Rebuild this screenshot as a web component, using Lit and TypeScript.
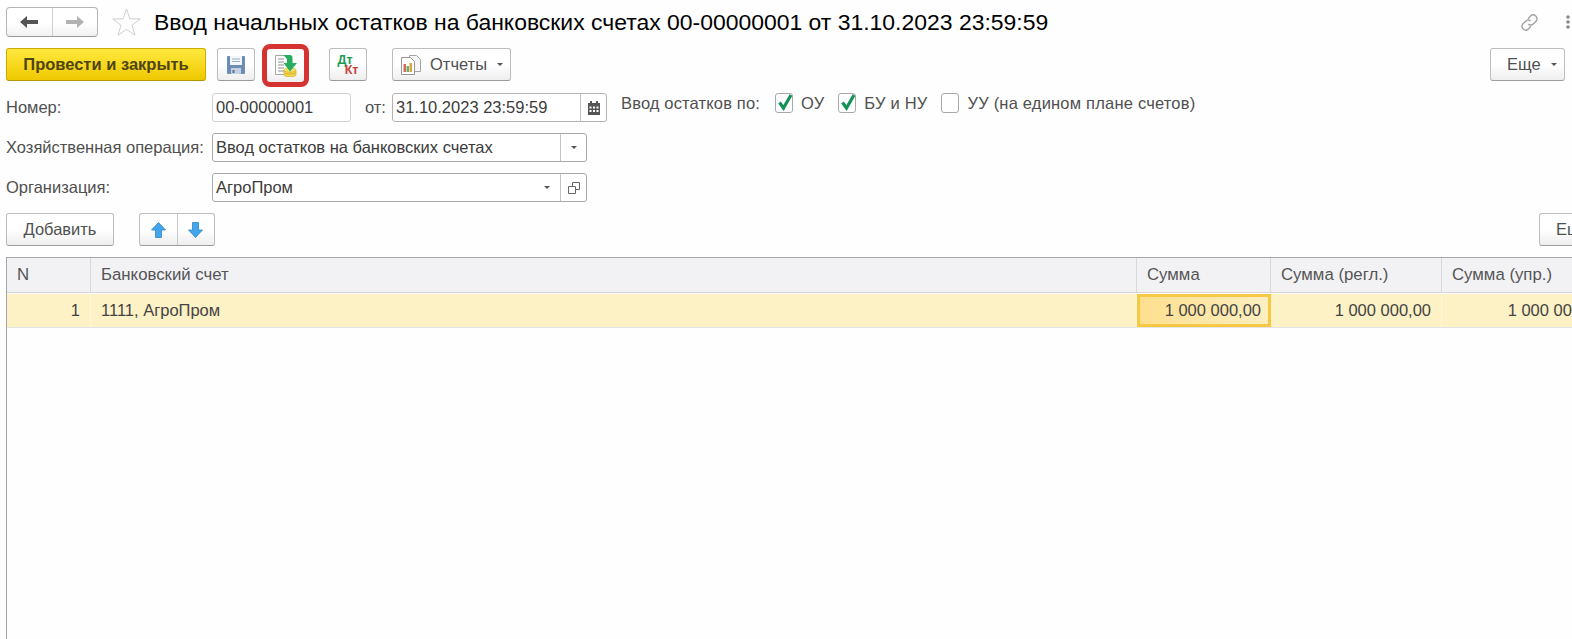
import { LitElement, html, css, svg } from "lit";
import { customElement } from "lit/decorators.js";

const caret = svg`<path d="M0 0h6L3 3z" fill="#555"/>`;
const check = html`<svg class="tick" width="20" height="20" viewBox="0 0 20 20"><path d="M4.500 9.500L8.500 15 16 2" fill="none" stroke="#14925a" stroke-width="3.200"/></svg>`;
const caretIcon = html`<svg class="caret" width="6" height="3" viewBox="0 0 6 3">${caret}</svg>`;
const segCaret = html`<svg width="6" height="3" viewBox="0 0 6 3">${caret}</svg>`;

@customElement("app-root")
export class AppRoot extends LitElement {
  static styles = css`
    :host {
      display: block;
      width: 1572px;
      height: 639px;
      overflow: hidden;
      background: #fefefe;
      font-family: "Liberation Sans", Arial, sans-serif;
      font-size: 16.500px;
      color: #505050;
    }
    * { box-sizing: border-box; }
    svg { display: block; flex: none; }
    .titlebar { display: flex; align-items: center; height: 30px; margin-top: 7px; padding-left: 6px; }
    .nav { display: flex; width: 92px; height: 30px; border: 1px solid #b5b5b5; border-bottom-color: #9a9a9a; border-radius: 4px; background: linear-gradient(#fff 55%, #f0f0f0); }
    .nav span { display: flex; align-items: center; justify-content: center; flex: 1; }
    .nav span + span { border-left: 1px solid #cfcfcf; }
    .star { margin-left: 14px; }
    h1 { margin: 0 0 0 13px; font-weight: 400; font-size: 22.950px; color: #000; white-space: nowrap; }
    .link { margin-left: auto; }
    .dots { margin: 0 2px 0 27px; }
    .toolbar { display: flex; align-items: flex-start; height: 33px; margin-top: 11px; padding: 0 7px 0 6px; }
    .btn { display: flex; align-items: center; justify-content: center; height: 33px; border: 1px solid #bdbdbd; border-bottom-color: #9c9c9c; border-radius: 3px; background: linear-gradient(#fff 50%, #eeeeee); white-space: nowrap; }
    .primary { width: 200px; border-color: #cfab00; border-bottom-color: #b69800; background: linear-gradient(#ffe93f, #efc800); font-weight: 700; color: #4f4510; }
    .icon-btn { width: 38px; }
    .save { margin-left: 11px; }
    .hl { width: 47px; height: 43px; margin: -4px 0 -6px 7px; border: 5px solid #d5332f; border-radius: 8px; background: linear-gradient(#fff 50%, #eeeeee); display: flex; align-items: center; justify-content: center; }
    .dtkt { margin-left: 20px; }
    .dt-wrap { display: flex; flex-direction: column; width: 21px; line-height: 10px; font-weight: 700; font-size: 12.500px; }
    .dt { color: #1a9a55; }
    .kt { color: #c8423a; align-self: flex-end; }
    .reports { width: 119px; margin-left: 25px; justify-content: flex-start; padding-left: 8px; }
    .reports span { margin-left: 9px; }
    .caret { margin-left: 10px; }
    .more { width: 75px; margin-left: auto; justify-content: flex-start; padding-left: 16px; }
    .row { display: flex; align-items: flex-start; padding-left: 6px; margin-top: 11px; height: 29px; }
    .row.first { margin-top: 12px; }
    .label { width: 206px; line-height: 29px; white-space: nowrap; }
    .field { display: flex; align-items: stretch; height: 29px; background: #fff; border: 1px solid #d2d2d2; border-radius: 3px; line-height: 27px; padding-left: 3px; color: #3c3c3c; }
    .num { width: 139px; }
    .ot { width: 41px; padding-left: 14px; line-height: 29px; }
    .date { width: 215px; border-color: #b3b3b3; padding-right: 0; }
    .grow { flex: 1; }
    .seg { width: 26px; flex: none; display: flex; align-items: center; justify-content: center; border-left: 1px solid #c4c4c4; }
    .seg.plain { border-left: none; }
    .combo { width: 375px; border-color: #a9a9a9; padding-right: 0; }
    .checks { display: flex; align-items: center; height: 20px; margin-left: 14px; white-space: nowrap; }
    .chk-label { width: 154px; letter-spacing: .15px; }
    .cb { width: 18px; height: 20px; border: 1px solid #a9a9a9; border-radius: 3px; background: #fff; margin-right: 8px; position: relative; flex: none; }
    .tick { position: absolute; left: -1px; top: -1px; }
    .cap { margin-right: 14px; letter-spacing: .2px; }
    .wide { letter-spacing: .2px; }
    .cmds { display: flex; align-items: flex-start; padding-left: 6px; margin-top: 11px; height: 33px; }
    .add { width: 108px; }
    .arrows { display: flex; width: 76px; margin-left: 25px; padding: 0; }
    .arrows span { flex: 1; display: flex; align-items: center; justify-content: center; height: 100%; }
    .arrows span + span { border-left: 1px solid #c9c9c9; }
    .clip { margin-left: auto; width: 33px; overflow: hidden; }
    .clip .btn { width: 75px; justify-content: flex-start; padding-left: 16px; }
    .table { margin: 11px 0 0 6px; width: 1620px; height: 382px; border-left: 1px solid #a6a6a6; border-top: 1px solid #a6a6a6; }
    .tr { display: grid; grid-template-columns: 84px 1046px 134px 171px 184px; }
    .head { height: 35px; background: #f2f2f5; border-bottom: 1px solid #d5d5d5; color: #555; font-size: 16.800px; }
    .head div { line-height: 33px; padding-left: 10px; border-right: 1px solid #d8d8d8; white-space: nowrap; }
    .body { height: 34px; background: #fdf1c6; border-bottom: 1px solid #e4e4e4; color: #444; margin-top: 1px; }
    .body div { line-height: 33px; padding: 0 10px; border-right: 1px solid #fff6dc; white-space: nowrap; text-align: right; }
    .body .left { text-align: left; padding-left: 10px; }
    .body .sel { border: 3px solid #f6c843; background: linear-gradient(90deg, #fddf8f, #fdefc0); line-height: 27px; padding-right: 7px; height: 33px; }
    .body .clipcell { padding-right: 21px; }
  `;

  render() {
    return html`
      <div class="titlebar">
        <div class="nav">
          <span><svg width="18" height="12" viewBox="0 0 18 12"><path d="M0 6L7 0v4h11v4H7v4z" fill="#555"/></svg></span>
          <span><svg width="18" height="12" viewBox="0 0 18 12"><path d="M18 6l-7-6v4H0v4h11v4z" fill="#b2b2b2"/></svg></span>
        </div>
        <svg class="star" width="29" height="28" viewBox="0 0 29 28"><path d="M14.500 1l3.400 9.800 10.300.2-8.200 6.300 3 9.900-8.500-5.900L6 27.200l3-9.900L.8 11l10.300-.2z" fill="#fff" stroke="#cdcdcd"/></svg>
        <h1>Ввод начальных остатков на банковских счетах 00-00000001 от 31.10.2023 23:59:59</h1>
        <svg class="link" width="19" height="19" viewBox="0 0 20 19" fill="none" stroke="#a3a3a3" stroke-width="1.500"><path d="M8.500 5.500l2.800-3a4 4 0 0 1 5.800 5.400l-3 3a4 4 0 0 1-5.300.3"/><path d="M11.500 13.500l-2.800 3a4 4 0 0 1-5.800-5.400l3-3a4 4 0 0 1 5.300-.3"/></svg>
        <svg class="dots" width="4" height="14" viewBox="0 0 4 14" fill="#8a8a8a"><circle cx="2" cy="2" r="1.800"/><circle cx="2" cy="7" r="1.800"/><circle cx="2" cy="12" r="1.800"/></svg>
      </div>

      <div class="toolbar">
        <div class="btn primary">Провести и закрыть</div>
        <div class="btn icon-btn save">
          <svg width="18" height="18" viewBox="0 0 18 18"><path d="M0 1a1 1 0 0 1 1-1h16a1 1 0 0 1 1 1v16a1 1 0 0 1-1 1H1a1 1 0 0 1-1-1z" fill="#6d8db5"/><path d="M3 0h12v9H3z" fill="#f2f5f9"/><path d="M5 3h8M5 5.500h8" stroke="#9db0c8"/><path d="M4 12h10v6H4z" fill="#c5d0de"/><path d="M5.500 14h2v3h-2z" fill="#5a7496"/></svg>
        </div>
        <div class="hl">
          <svg width="22" height="22" viewBox="0 0 22 22"><path d="M.5.500h13l2 2v17H.5z" fill="#fff" stroke="#a9a9a9"/><path d="M3 4h6M3 7h6M3 10h6M3 13h6M3 16h6" stroke="#8f8f8f"/><path d="M9 15v5c0 2.400 12 2.400 12 0v-5z" fill="#f1d54a" stroke="#cfa92a" stroke-width=".6"/><path d="M9 17.500c0 2 12 2 12 0" stroke="#cfa92a" fill="none" stroke-width=".8"/><ellipse cx="15" cy="15" rx="6" ry="2.200" fill="#f7e26a" stroke="#cfa92a" stroke-width=".6"/><path d="M8 0h7c1.500 0 2.500 1 2.500 2.500V8H22l-7 8.500L8.500 8H12V5c0-1.500-1.500-3-4-5z" fill="#27ad5f"/></svg>
        </div>
        <div class="btn icon-btn dtkt"><span class="dt-wrap"><span class="dt">Дт</span><span class="kt">Кт</span></span></div>
        <div class="btn reports">
          <svg width="20" height="20" viewBox="0 0 20 20"><path d="M8.500.5h7l4 4v12h-11z" fill="#f6f6f6" stroke="#a5a5a5"/><path d="M.5 2.500h9l4 4v13H.5z" fill="#fff" stroke="#979797"/><path d="M2.500 9h2.500v8H2.500z" fill="#d06a5a"/><path d="M5.500 11h2.500v6H5.500z" fill="#6ab06a"/><path d="M8.500 8h2.500v9H8.500z" fill="#d9a441"/></svg>
          <span>Отчеты</span>
          ${caretIcon}
        </div>
        <div class="btn more">Еще${caretIcon}</div>
      </div>

      <div class="row first">
        <div class="label">Номер:</div>
        <div class="field num">00-00000001</div>
        <div class="ot">от:</div>
        <div class="field date">
          <span class="grow">31.10.2023 23:59:59</span>
          <span class="seg"><svg width="12" height="14" viewBox="0 0 12 14"><path d="M0 2h12v12H0z" fill="#555"/><path d="M2 0h2v3H2zM8 0h2v3H8z" fill="#555"/><path d="M1.500 5.500h2v2h-2zM5 5.500h2v2H5zM8.500 5.500h2v2h-2zM1.500 9h2v2h-2zM5 9h2v2H5zM8.500 9h2v2h-2z" fill="#fff"/></svg></span>
        </div>
        <div class="checks">
          <span class="chk-label">Ввод остатков по:</span>
          <span class="cb">${check}</span><span class="cap">ОУ</span>
          <span class="cb">${check}</span><span class="cap">БУ и НУ</span>
          <span class="cb"></span><span class="wide">УУ (на едином плане счетов)</span>
        </div>
      </div>

      <div class="row">
        <div class="label">Хозяйственная операция:</div>
        <div class="field combo">
          <span class="grow">Ввод остатков на банковских счетах</span>
          <span class="seg">${segCaret}</span>
        </div>
      </div>

      <div class="row">
        <div class="label">Организация:</div>
        <div class="field combo">
          <span class="grow">АгроПром</span>
          <span class="seg plain">${segCaret}</span>
          <span class="seg"><svg width="12" height="12" viewBox="0 0 12 12" fill="#fff" stroke="#666"><path d="M4.500.5h7v7h-7z"/><path d="M.5 4.500h7v7h-7z"/></svg></span>
        </div>
      </div>

      <div class="cmds">
        <div class="btn add">Добавить</div>
        <div class="btn arrows">
          <span><svg width="15" height="16" viewBox="0 0 15 16"><path d="M7.500.5L14.500 8H10.500v7.500h-6V8H.5z" fill="#45a5ea" stroke="#2b86c8" stroke-width=".8"/></svg></span>
          <span><svg width="15" height="16" viewBox="0 0 15 16"><path d="M7.500 15.500L14.500 8H10.500V.5h-6V8H.5z" fill="#45a5ea" stroke="#2b86c8" stroke-width=".8"/></svg></span>
        </div>
        <div class="clip"><div class="btn">Еще</div></div>
      </div>

      <div class="table">
        <div class="tr head">
          <div>N</div><div>Банковский счет</div><div>Сумма</div><div>Сумма (регл.)</div><div>Сумма (упр.)</div>
        </div>
        <div class="tr body">
          <div>1</div><div class="left">1111, АгроПром</div><div class="sel">1 000 000,00</div><div>1 000 000,00</div><div class="clipcell">1 000 000,00</div>
        </div>
      </div>
    `;
  }
}
